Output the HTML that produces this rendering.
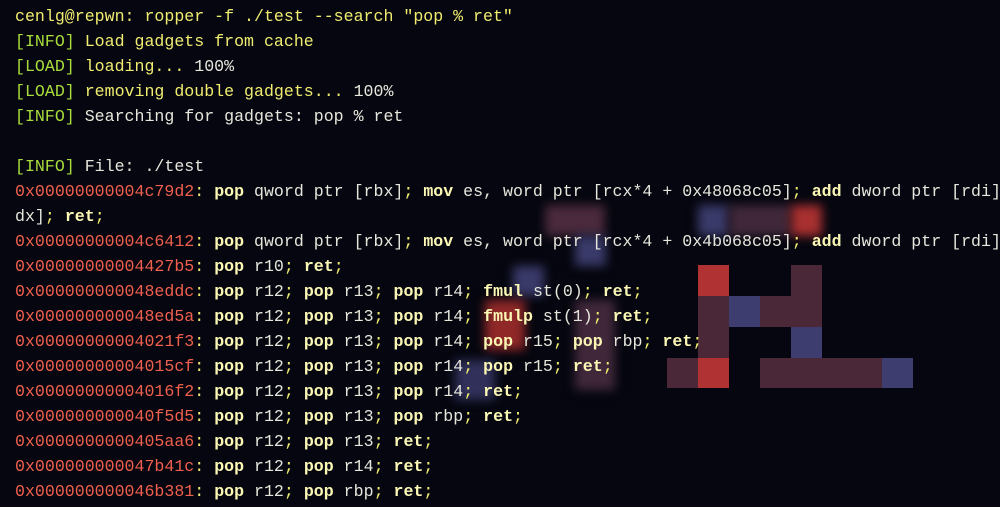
<!DOCTYPE html>
<html><head><meta charset="utf-8"><style>
html,body{margin:0;padding:0;background:#05060f;width:1000px;height:507px;overflow:hidden}
.wrap{position:relative;width:1000px;height:507px}
.b{position:absolute}
.bl{filter:blur(5px)}
pre{position:absolute;left:15px;top:4px;margin:0;font-family:"Liberation Mono",monospace;font-size:16.6px;line-height:25px;color:#e6e6dc;white-space:pre;z-index:2}
.y{color:#f0ec70}.g{color:#a8dc3c}.r{color:#f0604e}.k{color:#fbf7b4;font-weight:bold}.s{color:#f0ec70}
</style></head><body><div class="wrap">
<div class="b bl" style="left:545px;top:205px;width:60px;height:31px;background:#4a2a3c"></div>
<div class="b bl" style="left:698px;top:205px;width:31px;height:31px;background:#3a3a6a"></div>
<div class="b bl" style="left:729px;top:205px;width:62px;height:31px;background:#40283a"></div>
<div class="b bl" style="left:791px;top:205px;width:31px;height:31px;background:#a83030"></div>
<div class="b bl" style="left:575px;top:236px;width:31px;height:30px;background:#3a3a6a"></div>
<div class="b bl" style="left:513px;top:266px;width:31px;height:30px;background:#3a3a6a"></div>
<div class="b bl" style="left:485px;top:300px;width:40px;height:50px;background:#902828"></div>
<div class="b bl" style="left:575px;top:300px;width:40px;height:90px;background:#40283a"></div>
<div class="b bl" style="left:455px;top:360px;width:40px;height:40px;background:#30305a"></div>
<div class="b" style="left:698px;top:265px;width:31px;height:31px;background:#b03232"></div>
<div class="b" style="left:698px;top:296px;width:31px;height:62px;background:#4a2838"></div>
<div class="b" style="left:729px;top:296px;width:31px;height:31px;background:#3d3d70"></div>
<div class="b" style="left:760px;top:296px;width:62px;height:31px;background:#4a2838"></div>
<div class="b" style="left:791px;top:265px;width:31px;height:31px;background:#4a2838"></div>
<div class="b" style="left:791px;top:327px;width:31px;height:31px;background:#3d3d70"></div>
<div class="b" style="left:667px;top:358px;width:31px;height:30px;background:#4a2838"></div>
<div class="b" style="left:698px;top:358px;width:31px;height:30px;background:#b03232"></div>
<div class="b" style="left:760px;top:358px;width:122px;height:30px;background:#4a2838"></div>
<div class="b" style="left:882px;top:358px;width:31px;height:30px;background:#3d3d70"></div>
<pre><span class="y">cenlg@repwn: ropper -f ./test --search "pop % ret"</span>
<span class="g">[INFO]</span> <span class="y">Load gadgets from cache</span>
<span class="g">[LOAD]</span> <span class="y">loading...</span> 100%
<span class="g">[LOAD]</span> <span class="y">removing double gadgets...</span> 100%
<span class="g">[INFO]</span> Searching for gadgets: pop % ret

<span class="g">[INFO]</span> File: ./test
<span class="r">0x00000000004c79d2</span><span class="s">:</span> <span class="k">pop</span> qword ptr [rbx]<span class="s">;</span> <span class="k">mov</span> es, word ptr [rcx*4 + 0x48068c05]<span class="s">;</span> <span class="k">add</span> dword ptr [rdi]
dx]<span class="s">;</span> <span class="k">ret</span><span class="s">;</span>
<span class="r">0x00000000004c6412</span><span class="s">:</span> <span class="k">pop</span> qword ptr [rbx]<span class="s">;</span> <span class="k">mov</span> es, word ptr [rcx*4 + 0x4b068c05]<span class="s">;</span> <span class="k">add</span> dword ptr [rdi]
<span class="r">0x00000000004427b5</span><span class="s">:</span> <span class="k">pop</span> r10<span class="s">;</span> <span class="k">ret</span><span class="s">;</span>
<span class="r">0x000000000048eddc</span><span class="s">:</span> <span class="k">pop</span> r12<span class="s">;</span> <span class="k">pop</span> r13<span class="s">;</span> <span class="k">pop</span> r14<span class="s">;</span> <span class="k">fmul</span> st(0)<span class="s">;</span> <span class="k">ret</span><span class="s">;</span>
<span class="r">0x000000000048ed5a</span><span class="s">:</span> <span class="k">pop</span> r12<span class="s">;</span> <span class="k">pop</span> r13<span class="s">;</span> <span class="k">pop</span> r14<span class="s">;</span> <span class="k">fmulp</span> st(1)<span class="s">;</span> <span class="k">ret</span><span class="s">;</span>
<span class="r">0x00000000004021f3</span><span class="s">:</span> <span class="k">pop</span> r12<span class="s">;</span> <span class="k">pop</span> r13<span class="s">;</span> <span class="k">pop</span> r14<span class="s">;</span> <span class="k">pop</span> r15<span class="s">;</span> <span class="k">pop</span> rbp<span class="s">;</span> <span class="k">ret</span><span class="s">;</span>
<span class="r">0x00000000004015cf</span><span class="s">:</span> <span class="k">pop</span> r12<span class="s">;</span> <span class="k">pop</span> r13<span class="s">;</span> <span class="k">pop</span> r14<span class="s">;</span> <span class="k">pop</span> r15<span class="s">;</span> <span class="k">ret</span><span class="s">;</span>
<span class="r">0x00000000004016f2</span><span class="s">:</span> <span class="k">pop</span> r12<span class="s">;</span> <span class="k">pop</span> r13<span class="s">;</span> <span class="k">pop</span> r14<span class="s">;</span> <span class="k">ret</span><span class="s">;</span>
<span class="r">0x000000000040f5d5</span><span class="s">:</span> <span class="k">pop</span> r12<span class="s">;</span> <span class="k">pop</span> r13<span class="s">;</span> <span class="k">pop</span> rbp<span class="s">;</span> <span class="k">ret</span><span class="s">;</span>
<span class="r">0x0000000000405aa6</span><span class="s">:</span> <span class="k">pop</span> r12<span class="s">;</span> <span class="k">pop</span> r13<span class="s">;</span> <span class="k">ret</span><span class="s">;</span>
<span class="r">0x000000000047b41c</span><span class="s">:</span> <span class="k">pop</span> r12<span class="s">;</span> <span class="k">pop</span> r14<span class="s">;</span> <span class="k">ret</span><span class="s">;</span>
<span class="r">0x000000000046b381</span><span class="s">:</span> <span class="k">pop</span> r12<span class="s">;</span> <span class="k">pop</span> rbp<span class="s">;</span> <span class="k">ret</span><span class="s">;</span></pre>
</div></body></html>
